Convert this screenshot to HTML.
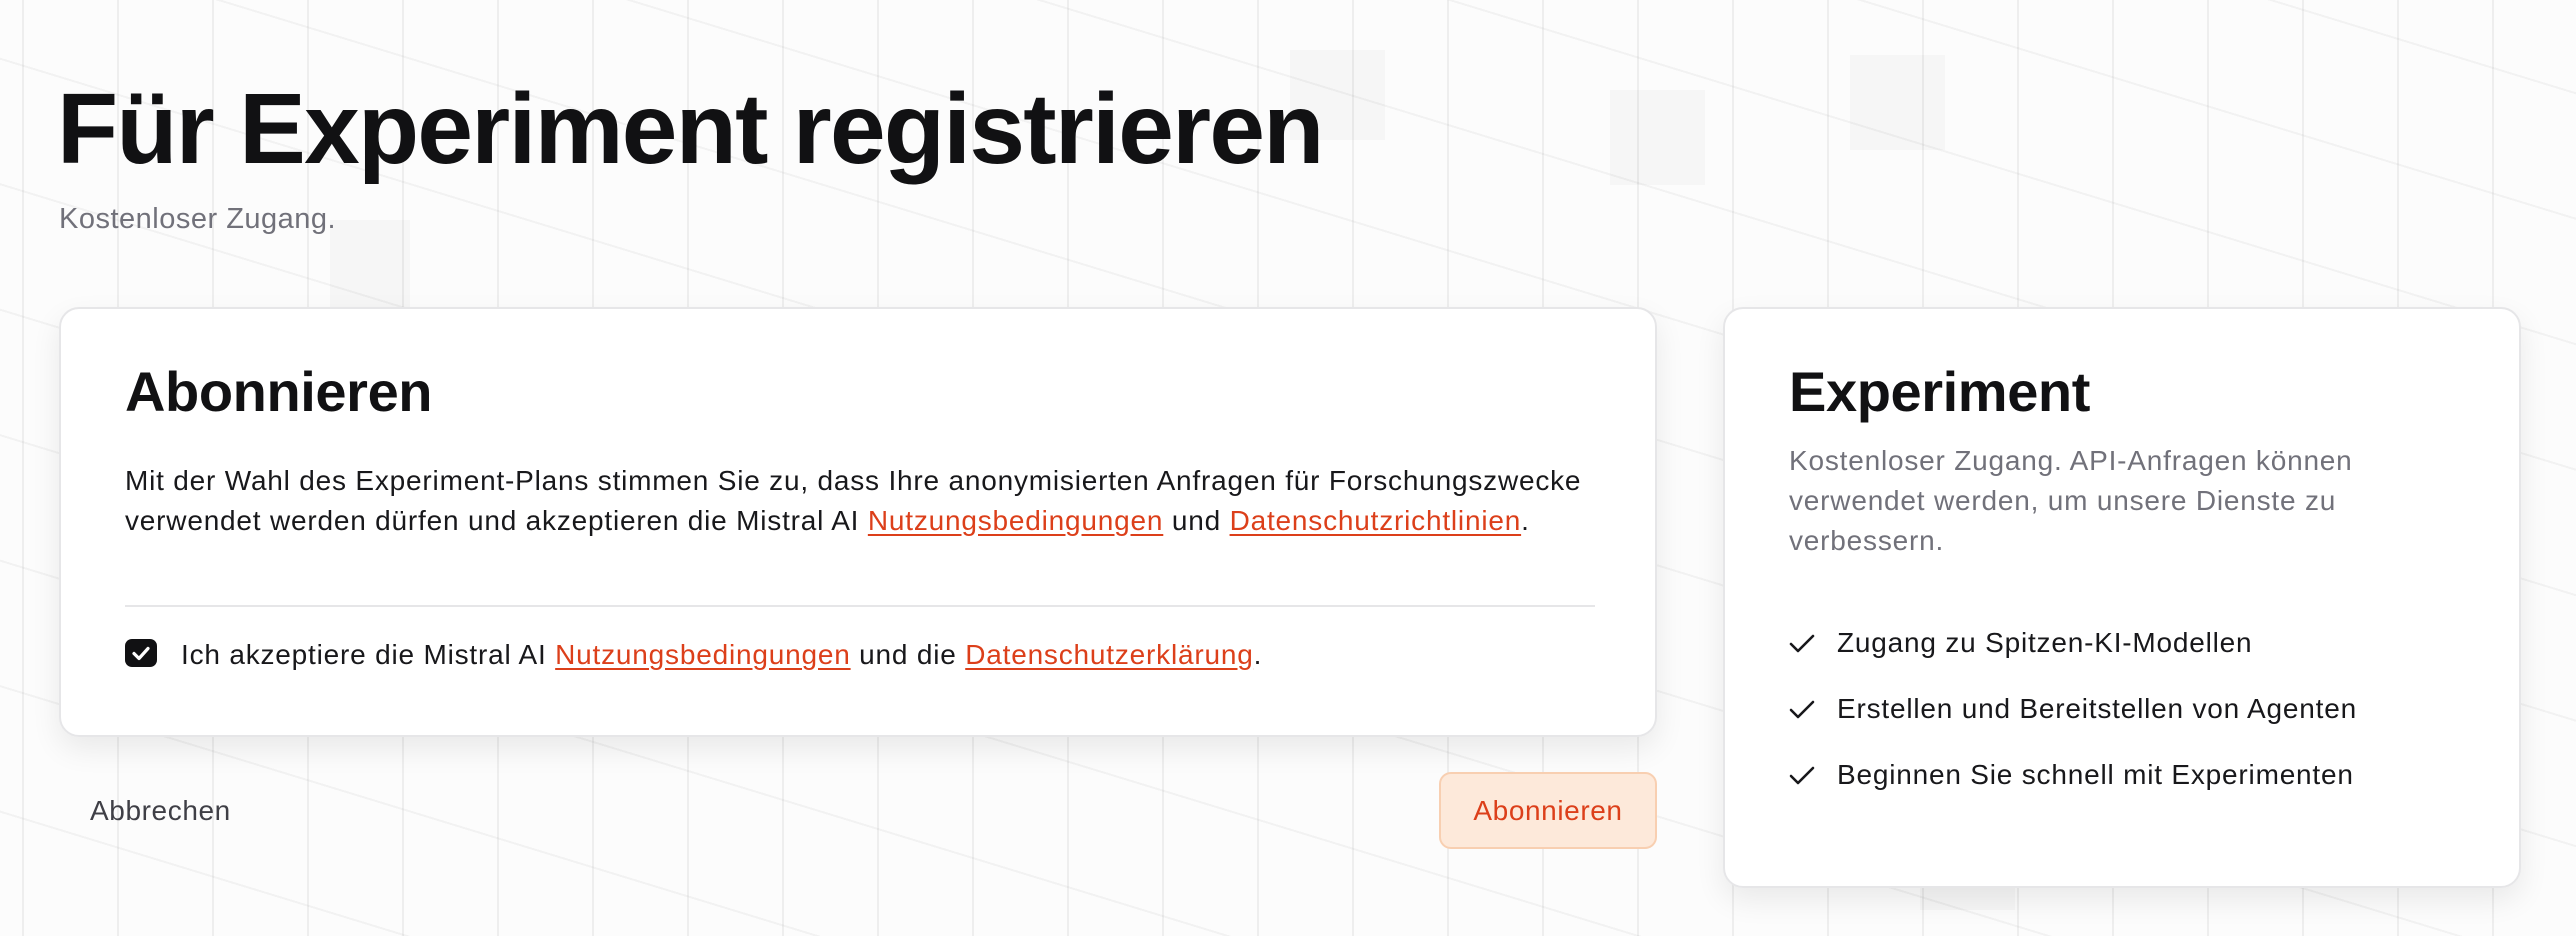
<!DOCTYPE html>
<html><head><meta charset="utf-8"><style>
*{margin:0;padding:0;box-sizing:border-box}
html,body{width:2576px;height:936px;overflow:hidden}
body{font-family:"Liberation Sans",sans-serif;color:#18181b;position:relative;
background-color:#fcfcfc;
background-image:
linear-gradient(90deg,rgba(0,0,0,0.055) 2px,transparent 2px);
background-size:95px 100%;background-position:22px 0;}
.diag{position:absolute;inset:0;background-image:repeating-linear-gradient(17deg,transparent 0,transparent 118px,rgba(0,0,0,0.04) 118px,rgba(0,0,0,0.04) 120px);}
.cell{position:absolute;background:rgba(0,0,0,0.025)}
h1{position:absolute;left:57px;top:72px;font-size:100px;font-weight:700;letter-spacing:-1.7px;color:#111113}
.sub{position:absolute;left:59px;top:203px;font-size:29px;color:#71717a;letter-spacing:0.5px}
.card{position:absolute;background:rgba(255,255,255,0.97);border:2px solid #e6e6e8;border-radius:20px;box-shadow:0 12px 30px rgba(0,0,0,0.08)}
.c1{left:59px;top:307px;width:1598px;height:430px}
.c2{left:1723px;top:307px;width:798px;height:581px}
h2{position:absolute;font-size:56px;font-weight:700;letter-spacing:-0.4px;color:#111113}
.p{position:absolute;font-size:28px;line-height:40px;letter-spacing:0.8px}
a{color:#dc3f1a;text-decoration:underline;text-underline-offset:4px}
.hr{position:absolute;left:64px;top:296px;width:1470px;height:2px;background:#e6e6e8}
.cb{position:absolute;left:64px;top:330px;width:32px;height:28px;background:#111113;border-radius:7px}
.ab{position:absolute;left:90px;top:795px;font-size:28px;color:#3f3f46;letter-spacing:0.6px}
.btn{position:absolute;left:1439px;top:772px;width:218px;height:77px;background:#fde9da;border:2px solid #f8cfb1;border-radius:12px;color:#dc3f1a;font-size:28px;letter-spacing:0.6px;text-align:center;line-height:73px}
.li{position:absolute;left:64px;font-size:28px;letter-spacing:0.8px}
.li svg{position:absolute;left:0;top:6px}
.li span{position:absolute;left:48px;top:0;white-space:nowrap}
</style></head><body>
<div class="diag"></div>
<div class="cell" style="left:1290px;top:50px;width:95px;height:90px"></div>
<div class="cell" style="left:1610px;top:90px;width:95px;height:95px"></div>
<div class="cell" style="left:1850px;top:55px;width:95px;height:95px"></div>
<div class="cell" style="left:330px;top:220px;width:80px;height:90px"></div>
<div class="cell" style="left:1920px;top:790px;width:95px;height:120px"></div>
<h1>Für Experiment registrieren</h1>
<div class="sub">Kostenloser Zugang.</div>
<div class="card c1">
<h2 style="left:64px;top:50px">Abonnieren</h2>
<div class="p" style="left:64px;top:152px;width:1520px;white-space:nowrap">Mit der Wahl des Experiment-Plans stimmen Sie zu, dass Ihre anonymisierten Anfragen für Forschungszwecke<br>verwendet werden dürfen und akzeptieren die Mistral AI <a>Nutzungsbedingungen</a> und <a>Datenschutzrichtlinien</a>.</div>
<div class="hr"></div>
<div class="cb"><svg width="32" height="28" viewBox="0 0 32 28"><path d="M9 14.5l5 5 9-10" stroke="#fff" stroke-width="3.2" fill="none" stroke-linecap="round" stroke-linejoin="round"/></svg></div>
<div class="p" style="left:120px;top:326px;white-space:nowrap">Ich akzeptiere die Mistral AI <a>Nutzungsbedingungen</a> und die <a>Datenschutzerklärung</a>.</div>
</div>
<div class="ab">Abbrechen</div>
<div class="btn">Abonnieren</div>
<div class="card c2">
<h2 style="left:64px;top:50px">Experiment</h2>
<div class="p" style="left:64px;top:132px;width:640px;color:#71717a">Kostenloser Zugang. API-Anfragen können verwendet werden, um unsere Dienste zu verbessern.</div>
<div class="li" style="top:318px"><svg width="26" height="22" viewBox="0 0 26 22"><path d="M2 11l7 7L24 3" stroke="#18181b" stroke-width="2.6" fill="none" stroke-linecap="round" stroke-linejoin="round"/></svg><span>Zugang zu Spitzen-KI-Modellen</span></div>
<div class="li" style="top:384px"><svg width="26" height="22" viewBox="0 0 26 22"><path d="M2 11l7 7L24 3" stroke="#18181b" stroke-width="2.6" fill="none" stroke-linecap="round" stroke-linejoin="round"/></svg><span>Erstellen und Bereitstellen von Agenten</span></div>
<div class="li" style="top:450px"><svg width="26" height="22" viewBox="0 0 26 22"><path d="M2 11l7 7L24 3" stroke="#18181b" stroke-width="2.6" fill="none" stroke-linecap="round" stroke-linejoin="round"/></svg><span>Beginnen Sie schnell mit Experimenten</span></div>
</div>
</body></html>
